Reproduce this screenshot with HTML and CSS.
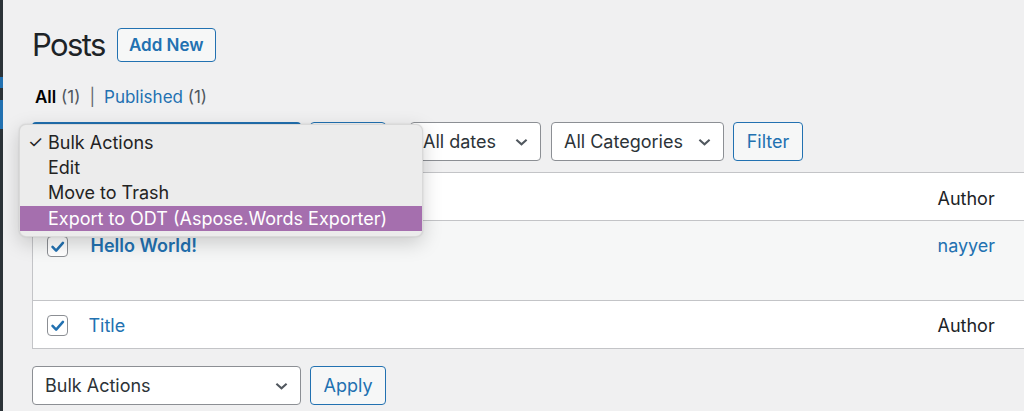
FILE: index.html
```html
<!DOCTYPE html>
<html lang="en">
<head>
<meta charset="utf-8">
<title>Posts</title>
<link rel="stylesheet" href="styles.css">
</head>
<body>
<div class="layout">
  <div class="edge"><span class="seg seg-a"></span><span class="seg seg-b"></span></div>
  <main class="wrap">
    <div class="heading">
      <h1 class="title">Posts</h1>
      <a class="btn btn-add">Add New</a>
    </div>
    <ul class="subsub">
      <li><span class="current">All</span> <span class="count">(1)</span></li>
      <li class="sep">|</li>
      <li><a class="link">Published</a> <span class="count">(1)</span></li>
    </ul>

    <div class="tablenav">
      <div class="bulk">
        <div class="select select-bulk focused"><span>Bulk Actions</span>
          <svg class="chev" viewBox="0 0 14 8"><path d="M1.5 1.5 L7 6.5 L12.5 1.5"/></svg>
        </div>
        <button class="btn btn-apply">Apply</button>
        <div class="menu">
          <div class="menu-item"><span class="tick">✓</span>Bulk Actions</div>
          <div class="menu-item">Edit</div>
          <div class="menu-item">Move to Trash</div>
          <div class="menu-item active">Export to ODT (Aspose.Words Exporter)</div>
        </div>
      </div>
      <div class="filters">
        <div class="select select-dates"><span>All dates</span>
          <svg class="chev" viewBox="0 0 14 8"><path d="M1.5 1.5 L7 6.5 L12.5 1.5"/></svg>
        </div>
        <div class="select select-cats"><span>All Categories</span>
          <svg class="chev" viewBox="0 0 14 8"><path d="M1.5 1.5 L7 6.5 L12.5 1.5"/></svg>
        </div>
        <button class="btn btn-filter">Filter</button>
      </div>
    </div>

    <table class="posts">
      <thead>
        <tr class="row-head">
          <td class="col-cb"><span class="cb"><svg viewBox="0 0 21 21"><path d="M5 11 L9 15 L16.5 6.5"/></svg></span></td>
          <th class="col-title"></th>
          <th class="col-author">Author</th>
        </tr>
      </thead>
      <tbody>
        <tr class="row-post">
          <td class="col-cb"><span class="cb"><svg viewBox="0 0 21 21"><path d="M5 11 L9 15 L16.5 6.5"/></svg></span></td>
          <td class="col-title"><a class="post-link">Hello World!</a></td>
          <td class="col-author"><a class="link">nayyer</a></td>
        </tr>
      </tbody>
      <tfoot>
        <tr class="row-foot">
          <td class="col-cb"><span class="cb"><svg viewBox="0 0 21 21"><path d="M5 11 L9 15 L16.5 6.5"/></svg></span></td>
          <th class="col-title"><a class="link">Title</a></th>
          <th class="col-author">Author</th>
        </tr>
      </tfoot>
    </table>

    <div class="tablenav tablenav-bottom">
      <div class="bulk">
        <div class="select select-bulk"><span>Bulk Actions</span>
          <svg class="chev" viewBox="0 0 14 8"><path d="M1.5 1.5 L7 6.5 L12.5 1.5"/></svg>
        </div>
        <button class="btn btn-apply">Apply</button>
      </div>
    </div>
  </main>
</div>
</body>
</html>
```

FILE: styles.css
```css
* { box-sizing: border-box; }

html, body {
  margin: 0;
  padding: 0;
  background: #f0f0f1;
  overflow: hidden;
  height: 411px;
}

body {
  font-family: Inter, "Noto Sans", "Liberation Sans", sans-serif;
  font-size: 18px;
  color: #1d2327;
}

.layout {
  display: flex;
  height: 411px;
}

.edge {
  flex: 0 0 3px;
  background: #2c3338;
  display: flex;
  flex-direction: column;
  padding-top: 77px;
  gap: 12px;
}
.seg { display: block; background: #2271b1; width: 3px; }
.seg-a { height: 11px; }
.seg-b { height: 29px; }

.wrap {
  flex: 1;
  padding-left: 29px;
  min-width: 0;
}

.heading {
  display: flex;
  align-items: center;
  gap: 12px;
  padding-top: 28px;
  height: 61px;
}

.title {
  margin: 0;
  font-weight: 400;
  font-size: 31px;
  letter-spacing: -1.6px;
  color: #1d2327;
  line-height: 33px;
}

.btn {
  font-family: inherit;
  font-size: 17px;
  border: 1px solid #2271b1;
  border-radius: 4px;
  background: #f6f7f7;
  color: #2271b1;
  display: inline-flex;
  align-items: center;
  justify-content: center;
  padding: 0;
  cursor: pointer;
}

.btn-add {
  width: 99px;
  height: 34px;
  font-weight: 600;
  font-size: 17px;
}

.subsub {
  list-style: none;
  margin: 24px 0 0 3px;
  padding: 0;
  display: flex;
  gap: 9px;
  height: 24px;
  line-height: 24px;
  font-size: 17px;
  color: #50575e;
}
.subsub .current { color: #000; font-weight: 600; }
.subsub .sep { color: #646970; }
.link { color: #2271b1; text-decoration: none; }

.tablenav {
  display: flex;
  margin-top: 13px;
  height: 39px;
}

.bulk {
  position: relative;
  display: flex;
  gap: 9px;
}

.select {
  height: 39px;
  background: #fff;
  border: 1px solid #8c8f94;
  border-radius: 4px;
  display: flex;
  align-items: center;
  justify-content: space-between;
  padding: 0 12px 0 12px;
  color: #2c3338;
  font-size: 18px;
}
.select.focused {
  border: 2px solid #2271b1;
}
.chev {
  width: 13px;
  height: 8px;
  fill: none;
  stroke: #50575e;
  stroke-width: 2.2;
}

.select-bulk { width: 269px; }
.btn-apply { width: 76px; height: 39px; font-size: 18px; }

.filters {
  display: flex;
  margin-left: 24px;
}
.select-dates { width: 131px; }
.select-cats { width: 173px; margin-left: 10px; }
.btn-filter { width: 70px; height: 39px; margin-left: 9px; font-size: 18px; }

.menu {
  position: absolute;
  left: -13px;
  top: 2px;
  width: 404px;
  height: 113px;
  background: #ececec;
  border-radius: 7px;
  border: 1px solid rgba(0,0,0,0.08);
  box-shadow: 0 6px 20px rgba(0,0,0,0.18), 0 0 2px rgba(0,0,0,0.12);
  padding-top: 5px;
  z-index: 10;
}
.menu-item {
  position: relative;
  height: 25px;
  line-height: 25px;
  padding-left: 28px;
  color: #232323;
  font-size: 18px;
}
.menu-item.active {
  background: #a56fae;
  color: #fff;
  margin-top: 1px;
}
.tick {
  position: absolute;
  left: 8px;
  top: 0;
  font-size: 17px;
}

.posts {
  margin-top: 11px;
  width: 1010px;
  border-collapse: collapse;
  border: 1px solid #c3c4c7;
  background: #fff;
  table-layout: fixed;
}
.posts td, .posts th {
  padding: 0;
  text-align: left;
  font-weight: 400;
}
.col-cb { width: 46px; padding-left: 14px !important; }
.col-title { padding-left: 10px !important; }
.col-author { width: 114px; padding-left: 10px !important; color: #1d2327; }

.row-head { height: 48px; border-bottom: 1px solid #c3c4c7; }
.row-head td, .row-head th { vertical-align: middle; padding-top: 3px !important; }

.row-post { height: 80px; background: #f6f7f7; }
.row-post td { vertical-align: top; padding-top: 14px !important; }
.row-post .col-cb { padding-top: 15px !important; }
.post-link { color: #2271b1; font-weight: 600; margin-left: 2px; text-decoration: none; }

.row-foot { height: 48px; border-top: 1px solid #c3c4c7; }
.row-foot td, .row-foot th { vertical-align: middle; padding-top: 2px !important; }

.cb {
  display: block;
  width: 21px;
  height: 21px;
  border: 1px solid #8c8f94;
  border-radius: 4px;
  background: #fff;
}
.cb svg {
  display: block;
  width: 19px;
  height: 19px;
  fill: none;
  stroke: #2271b1;
  stroke-width: 2.8;
  stroke-linecap: round;
  stroke-linejoin: round;
}

.tablenav-bottom { margin-top: 17px; }
```
